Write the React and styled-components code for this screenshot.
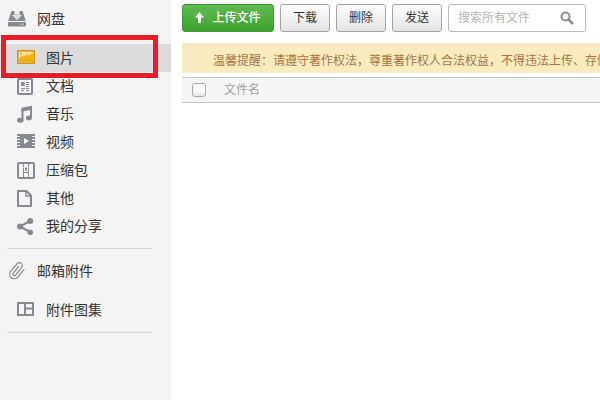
import React, { useState } from 'react';
import styled, { createGlobalStyle, css } from 'styled-components';

const GlobalStyle = createGlobalStyle`
    * {
        box-sizing: border-box;
    }

    body {
        margin: 0;
        background: #fff;
        color: #333;
        font-family: "Liberation Sans", "Noto Sans CJK SC", sans-serif;
        font-size: 14px;
    }
`

const Page = styled.div`
    display: flex;
    min-height: 100vh;
`

const Sidebar = styled.nav`
    flex: 0 0 171px;
    background: #f4f4f4;
`

const NavList = styled.ul`
    margin: 0;
    padding: 0;
    list-style: none;
`

const NavItem = styled.li`
    position: relative;
`

const navLink = css`
    display: flex;
    align-items: center;
    gap: 11px;
    height: 28px;
    line-height: 28px;
    color: #333;
    text-decoration: none;
`

const SectionLink = styled.a`
    ${navLink}
    height: ${({ $tall }) => ($tall ? '38px' : '28px')};
    margin-bottom: ${({ $tall }) => ($tall ? '6px' : '11px')};
    padding-left: 8px;
`

const NavLink = styled.a`
    ${navLink}
    padding-left: 17px;
    background: ${({ $active }) => ($active ? '#dcdcdc' : 'transparent')};
`

const Highlight = styled.span`
    position: absolute;
    top: -9px;
    left: 1px;
    right: 13px;
    bottom: -6px;
    border: 5px solid #ec1c24;
    pointer-events: none;
    z-index: 1;
`

const Divider = styled.hr`
    height: 1px;
    margin: 8px 19px 8px 7px;
    border: 0;
    background: #d6d6d6;
`

const Icon = styled.svg`
    flex: none;
    display: block;
    width: 18px;
    height: 18px;
    fill: none;
    stroke: #858a90;
    stroke-width: 2;
`

const Main = styled.main`
    flex: 1;
    min-width: 0;
    padding: 4px 0 0 11px;
`

const Toolbar = styled.div`
    display: flex;
    gap: 6px;
    height: 28px;
    margin-bottom: 11px;
`

const Button = styled.button`
    flex: none;
    display: flex;
    align-items: center;
    justify-content: center;
    width: 50px;
    padding: 0;
    border: 1px solid #a3a3a3;
    border-radius: 3px;
    background: linear-gradient(#fefefe, #e4e4e6);
    color: #333;
    font-family: inherit;
    font-size: 12px;
    line-height: 26px;
`

const UploadButton = styled(Button)`
    gap: 8px;
    width: 92px;
    border-color: #3b9a33;
    background: linear-gradient(#5fbb50, #3da22d);
    color: #fff;
    font-weight: 500;
`

const SearchBox = styled.label`
    flex: 0 1 138px;
    min-width: 0;
    display: flex;
    align-items: center;
    padding: 0 11px 0 9px;
    border: 1px solid #b9b9b9;
    border-radius: 3px;
    background: #fff;
`

const SearchInput = styled.input`
    flex: 1;
    width: 100%;
    min-width: 0;
    padding: 0;
    border: 0;
    outline: 0;
    background: none;
    color: #333;
    font-family: inherit;
    font-size: 12px;

    &::placeholder {
        color: #b4b4b4;
        opacity: 1;
    }
`

const Notice = styled.p`
    height: 30px;
    margin: 0 0 4px;
    padding: 3px 0 0 31px;
    overflow: hidden;
    background: #f8ebbf;
    color: #ab7240;
    font-size: 12px;
    line-height: 30px;
    white-space: nowrap;
`

const FileTable = styled.table`
    width: 100%;
    border-collapse: separate;
    border-spacing: 0;
`

const HeadCell = styled.th`
    width: ${({ $narrow }) => ($narrow ? '42px' : 'auto')};
    height: 26px;
    padding: ${({ $narrow }) => ($narrow ? '0 0 0 10px' : '0')};
    border-top: 1px solid #c4c5c9;
    border-bottom: 1px solid #c4c5c9;
    background: #f5f5f6;
    color: #a0a0a0;
    font-size: 12px;
    font-weight: 400;
    line-height: 24px;
    text-align: left;
`

const Checkbox = styled.input`
    appearance: none;
    display: block;
    width: 14px;
    height: 14px;
    margin: 0;
    border: 1px solid #a6a6a6;
    border-radius: 3px;
    background: linear-gradient(#fdfdfd 60%, #e6e6e6);

    &:checked {
        background: #4aa83a;
    }
`

const DiskIcon = () => (
    <Icon viewBox="0 0 18 18">
        <path d="M3.500 1h3v4h-2.500l5 5 5-5h-2.500v-4h3l3.300 10h-17.600z" fill="#858a90" stroke="none" />
        <path d="M7 3.500h4v2h1.800l-3.800 3.700-3.800-3.700h1.800z" fill="#858a90" fillOpacity=".25" stroke="none" />
        <rect x="0" y="12" width="18" height="4.500" rx="1" fill="#858a90" stroke="none" />
        <path d="M12.500 14.200h1.200M14.700 14.200h1.200" stroke="#f4f4f4" strokeWidth="1" />
    </Icon>
)

const PictureIcon = () => (
    <Icon viewBox="0 0 18 18">
        <rect x="0" y="1" width="18" height="14" rx="1" fill="#cf9314" stroke="none" />
        <rect x="1.500" y="2.500" width="15" height="11" fill="#fbe08a" stroke="none" />
        <path d="M2 10l3.200-3.500 2.300 1.300 2.500-2.800 2 1.500 4-2.500v9h-14z" fill="#f0b010" stroke="none" />
        <circle cx="4" cy="4.700" r="1" fill="#f0b010" stroke="none" />
    </Icon>
)

const DocumentIcon = () => (
    <Icon viewBox="0 0 18 18">
        <rect x="1" y="2" width="14" height="15" rx="1" />
        <path d="M4 6.500h4M4 8.500h4M9 5.500h3M9 7.500h3M4 11.500h4M4 13.500h3M9 9.500h3M9 11.500h3M9 13.500h3" strokeWidth="1" />
        <path d="M4 5h3.500v3h-3.500z" fill="#858a90" stroke="none" />
    </Icon>
)

const MusicIcon = () => (
    <Icon viewBox="0 0 18 18">
        <path d="M5.500 15v-10.500l8.500-2v10" />
        <path d="M4.500 2.800l10.500-2v4l-10.500 2z" fill="#858a90" stroke="none" />
        <ellipse cx="3.300" cy="15.300" rx="3.300" ry="2.500" fill="#858a90" stroke="none" />
        <ellipse cx="11.900" cy="13" rx="3" ry="2.400" fill="#858a90" stroke="none" />
    </Icon>
)

const FilmIcon = () => (
    <Icon viewBox="0 0 18 18">
        <rect x="3" y="1" width="12" height="14" fill="#858a90" stroke="none" />
        <path d="M0 2h3M0 5h3M0 8h3M0 11h3M0 14h3M15 2h3M15 5h3M15 8h3M15 11h3M15 14h3" />
        <path d="M7 5l5 3-5 3z" fill="#f4f4f4" stroke="none" />
    </Icon>
)

const ArchiveIcon = () => (
    <Icon viewBox="0 0 18 18">
        <rect x="1" y="2" width="16" height="15" rx="1" />
        <path d="M6.500 2v4.500M11.500 2v4.500M6.500 12v5M11.500 12v5" strokeWidth="1" />
        <path d="M6.500 7v4.500h5v-4.500" strokeWidth="1" />
        <path d="M9 6.500v3" />
    </Icon>
)

const FileIcon = () => (
    <Icon viewBox="0 0 18 18">
        <path d="M1 2h8.500l4.500 4.500v10.500h-13z" strokeLinejoin="round" />
        <path d="M9 2v5h5" strokeWidth="1.500" />
    </Icon>
)

const ShareIcon = () => (
    <Icon viewBox="0 0 18 18">
        <path d="M13 4l-10 5.500 10 5.500" />
        <g fill="#858a90" stroke="none">
            <circle cx="13.200" cy="4" r="3" />
            <circle cx="3" cy="9.500" r="3" />
            <circle cx="13.200" cy="15.200" r="2.800" />
        </g>
    </Icon>
)

const ClipIcon = () => (
    <Icon viewBox="0 0 24 24">
        <path
            d="M21.400 11l-9.200 9.200a6 6 0 0 1-8.500-8.500l9.200-9.200a4 4 0 0 1 5.700 5.700l-9.200 9.200a2 2 0 0 1-2.800-2.800l8.500-8.500"
            transform="rotate(-6 12 12)"
            strokeWidth="1.600"
            strokeLinecap="round"
        />
    </Icon>
)

const AlbumIcon = () => (
    <Icon viewBox="0 0 18 18">
        <rect x="1" y="2" width="15" height="12" />
        <path d="M8 2v12M8 7.500h8" />
    </Icon>
)

const ArrowUpIcon = styled.svg`
    width: 9px;
    height: 12px;
    fill: #fff;
`

const SearchIcon = styled.svg`
    flex: none;
    width: 14px;
    height: 14px;
    fill: none;
    stroke: #8c8c8c;
    stroke-width: 2;
`

const categories = [
    { id: 'picture', label: '图片', icon: PictureIcon },
    { id: 'document', label: '文档', icon: DocumentIcon },
    { id: 'music', label: '音乐', icon: MusicIcon },
    { id: 'video', label: '视频', icon: FilmIcon },
    { id: 'archive', label: '压缩包', icon: ArchiveIcon },
    { id: 'other', label: '其他', icon: FileIcon },
    { id: 'share', label: '我的分享', icon: ShareIcon },
]

const App = () => {
    const [active, setActive] = useState('picture');

    return (
        <Page>
            <GlobalStyle />
            <Sidebar>
                <SectionLink href="#disk" $tall><DiskIcon />网盘</SectionLink>
                <NavList>
                    {categories.map(({ id, label, icon: CategoryIcon }) => (
                        <NavItem key={id}>
                            <NavLink href={`#${id}`} $active={active === id} onClick={() => setActive(id)}>
                                <CategoryIcon />
                                {label}
                            </NavLink>
                            {id === 'picture' && <Highlight />}
                        </NavItem>
                    ))}
                </NavList>
                <Divider />
                <SectionLink href="#mail"><ClipIcon />邮箱附件</SectionLink>
                <NavLink href="#album"><AlbumIcon />附件图集</NavLink>
                <Divider />
            </Sidebar>
            <Main>
                <Toolbar>
                    <UploadButton type="button">
                        <ArrowUpIcon viewBox="0 0 9 12">
                            <path d="M4.500 0l4.500 5.500h-3v5.500h-3v-5.500h-3z" />
                        </ArrowUpIcon>
                        上传文件
                    </UploadButton>
                    <Button type="button">下载</Button>
                    <Button type="button">删除</Button>
                    <Button type="button">发送</Button>
                    <SearchBox>
                        <SearchInput type="text" placeholder="搜索所有文件" aria-label="搜索所有文件" />
                        <SearchIcon viewBox="0 0 14 14">
                            <circle cx="5.500" cy="5.500" r="4" />
                            <path d="M8.500 8.500l4.500 4.500" strokeWidth="2.500" />
                        </SearchIcon>
                    </SearchBox>
                </Toolbar>
                <Notice>温馨提醒：请遵守著作权法，尊重著作权人合法权益，不得违法上传、存储</Notice>
                <FileTable>
                    <thead>
                        <tr>
                            <HeadCell $narrow><Checkbox type="checkbox" aria-label="全选" /></HeadCell>
                            <HeadCell>文件名</HeadCell>
                        </tr>
                    </thead>
                </FileTable>
            </Main>
        </Page>
    )
}

export default App;
